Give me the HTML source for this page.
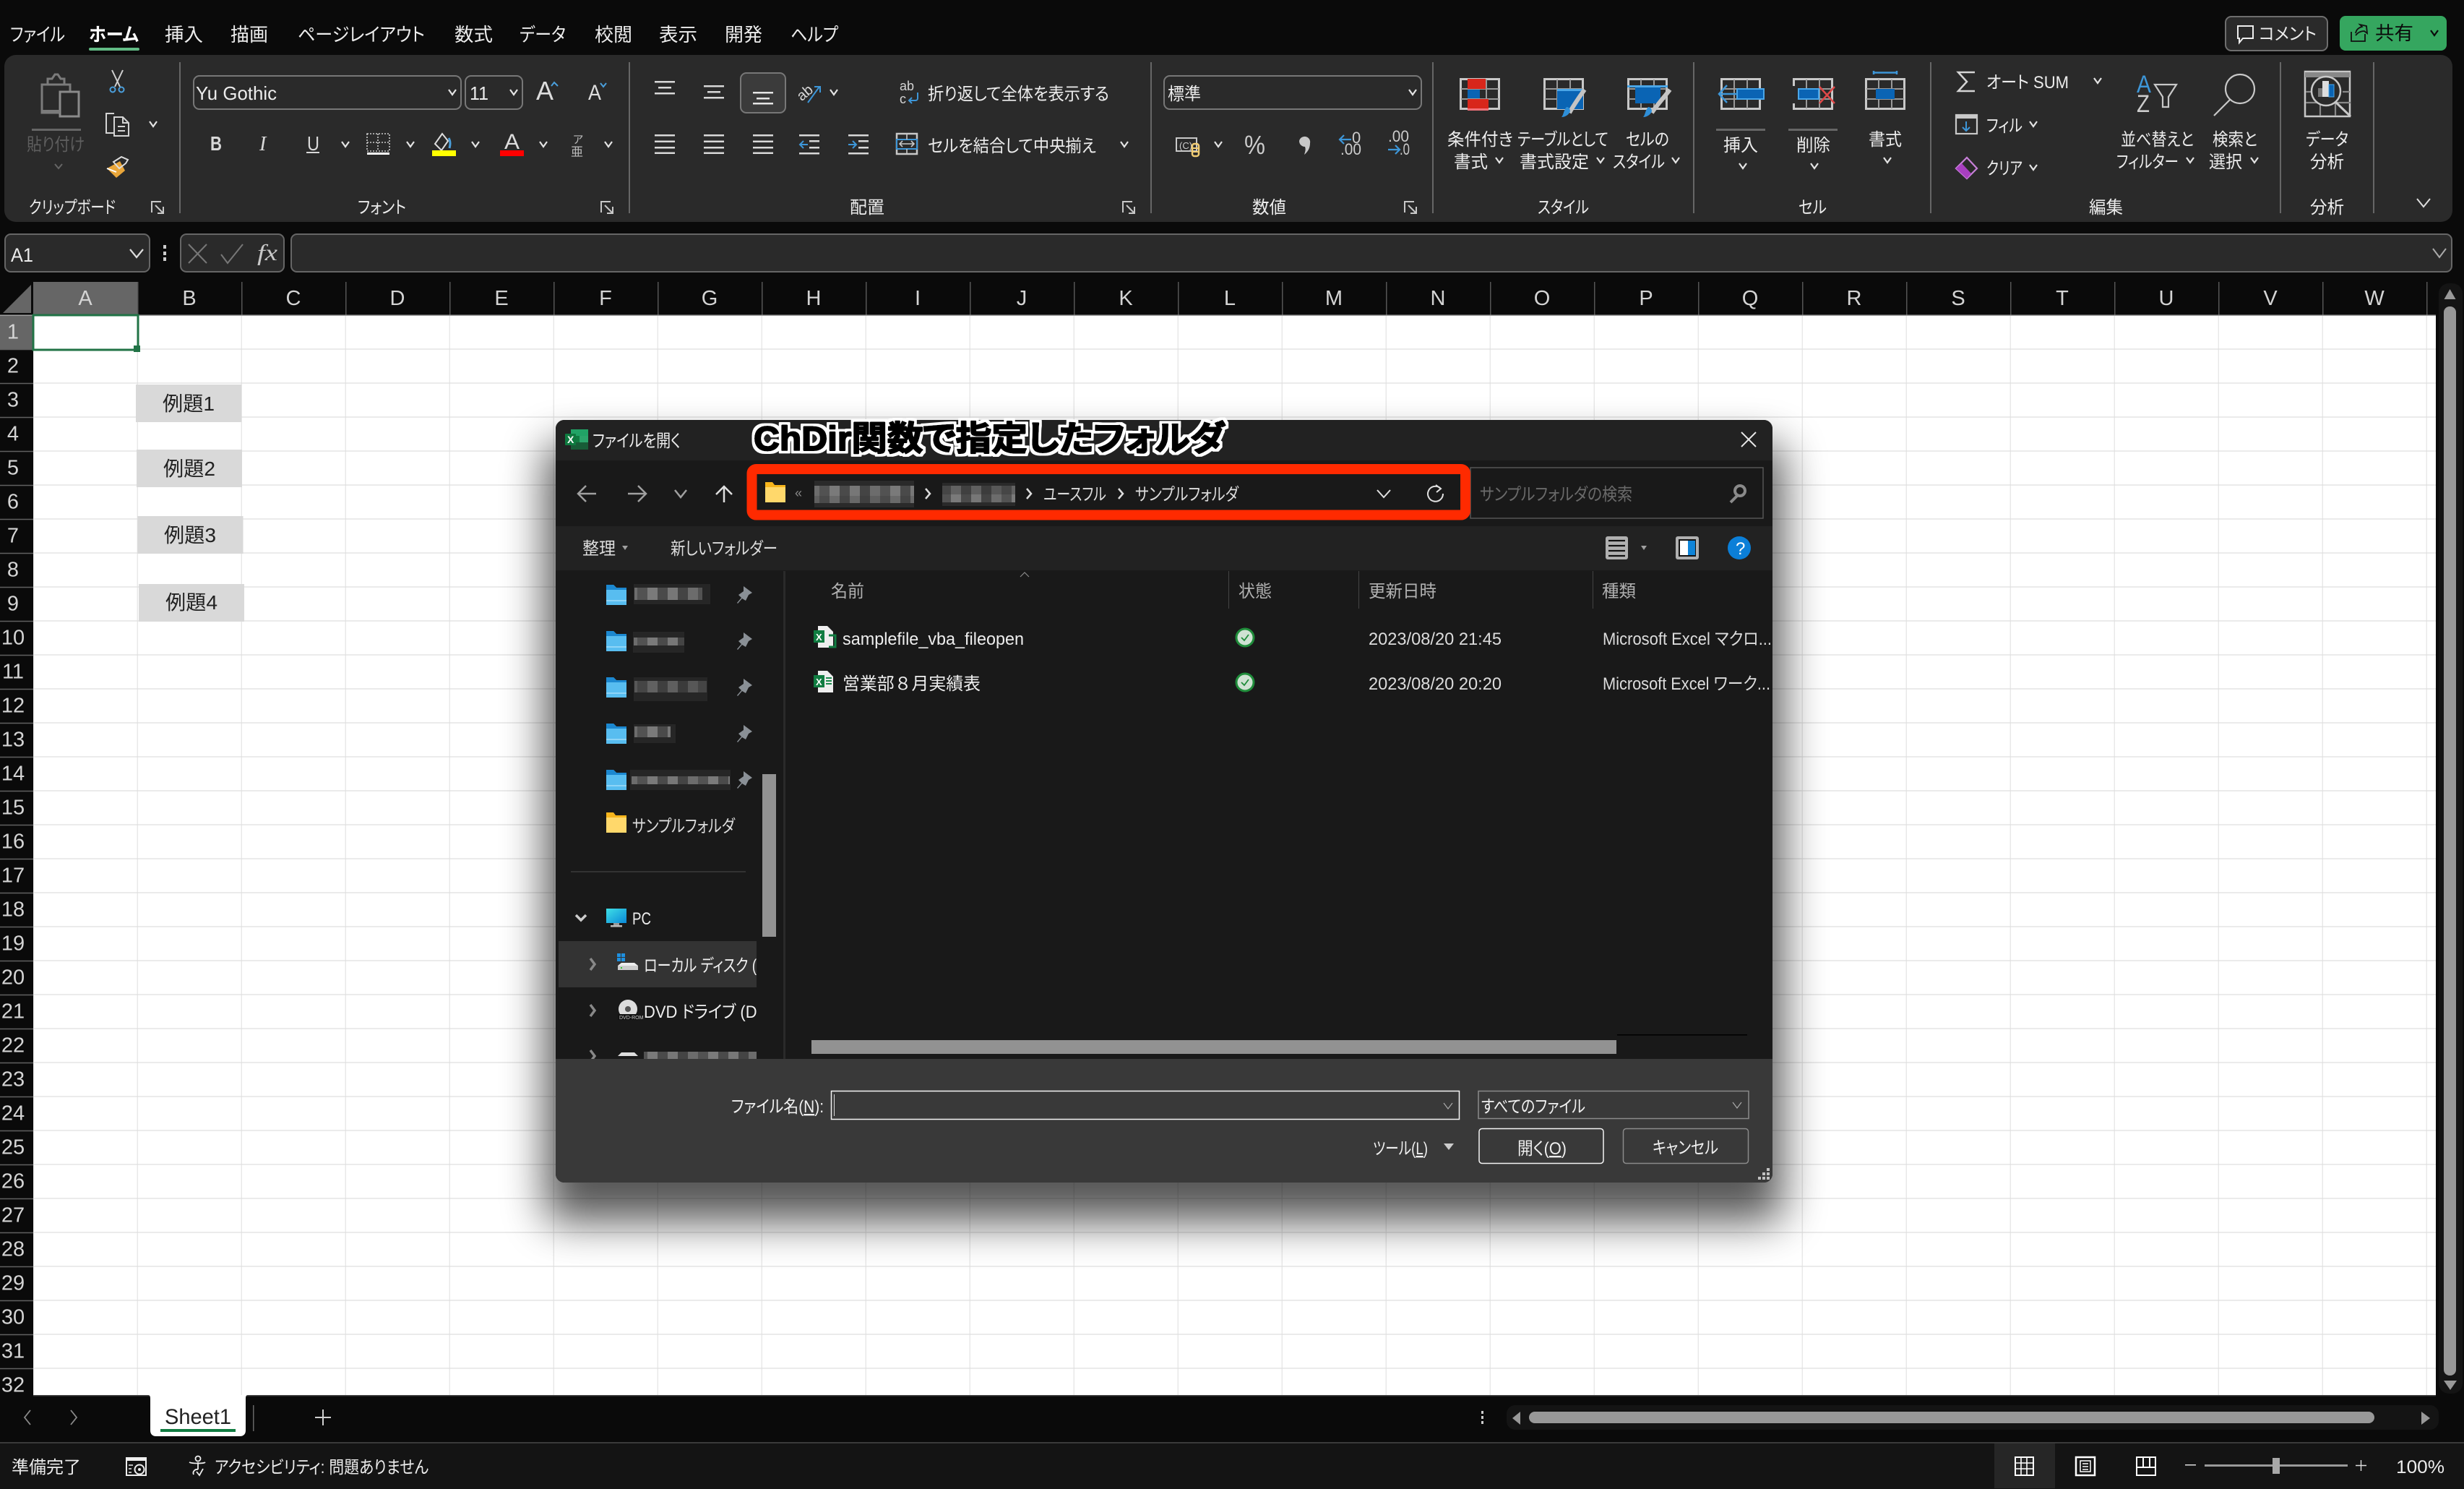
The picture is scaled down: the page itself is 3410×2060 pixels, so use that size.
<!DOCTYPE html>
<html lang="ja"><head><meta charset="utf-8"><title>Excel</title>
<style>
html,body{margin:0;padding:0;background:#0a0a0a}
svg{display:block}
text{font-family:"Liberation Sans","Noto Sans CJK JP",sans-serif;fill:#ececec;font-size:24px;font-feature-settings:"palt";white-space:pre}
.tab text{font-size:26px}
.col text{font-size:29px;text-anchor:middle;fill:#d4d4d4}
.row text{font-size:29px;text-anchor:middle;fill:#d4d4d4}
.d text{fill:#dcdcdc}
</style></head><body>
<svg xmlns="http://www.w3.org/2000/svg" width="3410" height="2060" viewBox="0 0 3410 2060">
<defs>
<pattern id="g" x="46.7" y="436.6" width="144" height="47" patternUnits="userSpaceOnUse"><rect width="144" height="47" fill="#fff"/><rect x="143" width="1.5" height="47" fill="#dedede"/><rect y="45.8" width="144" height="1.5" fill="#dedede"/></pattern>
<pattern id="m" x="0" y="0" width="84" height="14" patternUnits="userSpaceOnUse"><rect width="84" height="14" fill="#5d5d5d"/><rect width="14" height="14" fill="#777"/><rect x="14" width="14" height="14" fill="#444"/><rect x="28" width="14" height="14" fill="#6c6c6c"/><rect x="42" width="14" height="14" fill="#525252"/><rect x="56" width="14" height="14" fill="#7a7a7a"/><rect x="70" width="14" height="14" fill="#4a4a4a"/></pattern>
<path id="c" d="M-5-4L0 3 5-4" fill="none" stroke="#e4e4e4" stroke-width="2.2"/>
<path id="la" d="M0 15V0h13M5 5l10 10M16 7v9H8" fill="none" stroke="#c8c8c8" stroke-width="2"/>
<g id="grid" fill="none" stroke="#c8c8c8"><rect x="1.5" y="1.5" width="53" height="41" stroke-width="3"/><path d="M19 2v40M37 2v40M2 15h52M2 29h52" stroke-width="2" stroke="#999"/></g>
<g id="pin"><path d="M9 0l12 9-5 3-4 8-5-3-6 7-1-1 6-7-4-4 7-5z" fill="#8a9096"/></g>
<g id="fold"><path d="M0 3a2 2 0 0 1 2-2h8l4 4h14v24H0z" fill="#58bdf0"/><path d="M0 1h10l4 4H28v3H0z" fill="#1c88d0"/><rect y="22" width="28" height="2" fill="#8ed4f7"/></g>
<g id="yfold"><path d="M0 2h10l4 4h14v22H0z" fill="#ffd86b"/><path d="M0 0h10l3 4H28v3H0z" fill="#f7b51c"/></g>
<g id="lines4" fill="#d8d8d8"><rect y="0" width="28" height="2.5"/><rect y="8.5" width="28" height="2.5"/><rect y="17" width="28" height="2.5"/><rect y="24.5" width="28" height="2.5"/></g>
<g id="ok"><circle r="12" fill="#cfe2d3" stroke="#1f8c3a" stroke-width="3"/><path d="M-5 0l4 4 6-8" fill="none" stroke="#1f8c3a" stroke-width="1.8"/></g>
<filter id="o" x="-3%" y="-30%" width="106%" height="160%"><feMorphology in="SourceAlpha" operator="dilate" radius="3.5" result="w0"/><feFlood flood-color="#fff"/><feComposite in2="w0" operator="in" result="w"/><feMerge><feMergeNode in="w"/><feMergeNode in="SourceGraphic"/></feMerge></filter>
<filter id="sh" x="-15%" y="-25%" width="130%" height="150%"><feGaussianBlur stdDeviation="30"/></filter>
<clipPath id="dlg"><rect x="769" y="581" width="1684" height="1055" rx="12"/></clipPath>
<clipPath id="nav"><rect x="770" y="790" width="277" height="675"/></clipPath>
<linearGradient id="pc" x1="0" y1="0" x2="1" y2="1"><stop offset="0" stop-color="#3fe0e6"/><stop offset="1" stop-color="#0a88d8"/></linearGradient>
</defs>

<rect width="3410" height="2060" fill="#0a0a0a"/>

<!-- menu tabs -->
<g class="tab">
<text x="14" y="57" textLength="76" lengthAdjust="spacingAndGlyphs">ファイル</text>
<text x="123" y="57" textLength="69" lengthAdjust="spacingAndGlyphs" font-weight="700" style="fill:#fff">ホーム</text>
<text x="228" y="57" textLength="53" lengthAdjust="spacingAndGlyphs">挿入</text>
<text x="319" y="57" textLength="52" lengthAdjust="spacingAndGlyphs">描画</text>
<text x="412" y="57" textLength="176" lengthAdjust="spacingAndGlyphs">ページレイアウト</text>
<text x="629" y="57" textLength="53" lengthAdjust="spacingAndGlyphs">数式</text>
<text x="719" y="57" textLength="64" lengthAdjust="spacingAndGlyphs">データ</text>
<text x="823" y="57" textLength="52" lengthAdjust="spacingAndGlyphs">校閲</text>
<text x="912" y="57" textLength="53" lengthAdjust="spacingAndGlyphs">表示</text>
<text x="1003" y="57" textLength="52" lengthAdjust="spacingAndGlyphs">開発</text>
<text x="1094" y="57" textLength="66" lengthAdjust="spacingAndGlyphs">ヘルプ</text>
</g>
<rect x="123" y="66" width="70" height="4" rx="2" fill="#62bb85"/>

<!-- comment / share -->
<rect x="3080" y="23" width="141" height="47" rx="8" fill="#2a2a2a" stroke="#6e6e6e" stroke-width="2"/>
<path d="M3097 36h21v17h-14l-5 6v-6h-2z" fill="none" stroke="#eee" stroke-width="2"/>
<text x="3126" y="55" textLength="80" lengthAdjust="spacingAndGlyphs">コメント</text>
<rect x="3238" y="22" width="148" height="48" rx="8" fill="#35a65f"/>
<path d="M3254 44v13h19v-10M3260 46c1-6 5-8 9-9l-3-3 9 2 1 10-4-3c-5 0-9 2-12 6" fill="none" stroke="#111" stroke-width="1.8"/>
<text x="3287" y="55" textLength="53" lengthAdjust="spacingAndGlyphs" style="fill:#0a0a0a;font-size:26px">共有</text>
<path d="M3364 42l5 7 5-7" fill="none" stroke="#0a0a0a" stroke-width="2.2"/>

<!-- ribbon -->
<rect x="6" y="76" width="3388" height="231" rx="16" fill="#2a2a2a"/>
<g fill="#666"><rect x="248" y="86" width="2" height="209"/><rect x="870" y="86" width="2" height="209"/><rect x="1592" y="86" width="2" height="209"/><rect x="1982" y="86" width="2" height="209"/><rect x="2343" y="86" width="2" height="209"/><rect x="2671" y="86" width="2" height="209"/><rect x="3155" y="86" width="2" height="209"/><rect x="3284" y="86" width="2" height="209"/></g>

<!-- clipboard -->
<g fill="none" stroke="#7b7b7b" stroke-width="3"><path d="M65 117H58V156H83"/><path d="M88 117H97V127"/><path d="M66 117v-8h6l4-6h4l4 6h5v8z"/><rect x="83" y="127" width="26" height="34" stroke="#8b8b8b"/></g>
<rect x="58" y="152" width="25" height="5" fill="#7b7b7b"/>
<rect x="44" y="178" width="68" height="3" fill="#666"/>
<text x="37" y="208" textLength="80" lengthAdjust="spacingAndGlyphs" style="fill:#5e5e5e">貼り付け</text>
<path d="M76 227l5 6 5-6" fill="none" stroke="#666" stroke-width="2"/>
<g fill="none"><path d="M155 97l11 23M170 97l-11 23" stroke="#d0d0d0" stroke-width="2"/><circle cx="156" cy="124" r="3.5" stroke="#4a9fdc" stroke-width="2"/><circle cx="168" cy="124" r="3.5" stroke="#4a9fdc" stroke-width="2"/>
<path d="M158 184h-11v-27h11M158 162h12l8 8v18h-20z M170 162v8h8M163 175h10M163 181h10" stroke="#d4d4d4" stroke-width="2"/></g>
<use href="#c" x="212" y="172"/>
<path d="M148 233l18-10 7 13-12 10z" fill="#e9a63a"/>
<path d="M157 224l11-7 9 4-3 5-9 7z" fill="none" stroke="#ddd" stroke-width="2"/>
<path d="M148 233l13 5" stroke="#fff" stroke-width="2"/>
<text x="40" y="295" textLength="120" lengthAdjust="spacingAndGlyphs">クリップボード</text>
<use href="#la" x="210" y="279"/>

<!-- font -->
<rect x="268" y="105" width="370" height="46" rx="8" fill="#2a2a2a" stroke="#777" stroke-width="2"/>
<text x="271" y="138" textLength="112" lengthAdjust="spacingAndGlyphs" style="font-size:26px">Yu Gothic</text>
<use href="#c" x="626" y="128"/>
<rect x="644" y="105" width="79" height="46" rx="8" fill="#2a2a2a" stroke="#777" stroke-width="2"/>
<text x="650" y="138" textLength="26" lengthAdjust="spacingAndGlyphs" style="font-size:26px">11</text>
<use href="#c" x="711" y="128"/>
<text x="742" y="138" style="font-size:36px;fill:#ddd" textLength="24" lengthAdjust="spacingAndGlyphs">A</text>
<path d="M763 119l4-5 5 5" fill="none" stroke="#4a9fdc" stroke-width="2"/>
<text x="814" y="138" style="font-size:30px;fill:#ddd" textLength="18" lengthAdjust="spacingAndGlyphs">A</text>
<path d="M831 115l4 5 4-5" fill="none" stroke="#4a9fdc" stroke-width="2"/>
<text x="291" y="208" style="font-size:28px;font-weight:700;fill:#d8d8d8" textLength="16" lengthAdjust="spacingAndGlyphs">B</text>
<text x="359" y="208" style="font-size:28px;font-family:'Liberation Serif',serif;font-style:italic;fill:#d8d8d8">I</text>
<text x="425" y="208" style="font-size:28px;fill:#d8d8d8" textLength="17" lengthAdjust="spacingAndGlyphs">U</text>
<rect x="424" y="210" width="18" height="2" fill="#d8d8d8"/>
<use href="#c" x="478" y="200"/>
<path d="M508 185h31v24h-31zM523 185v24M508 197h31" fill="none" stroke="#ccc" stroke-width="1.6" stroke-dasharray="2 2"/>
<rect x="508" y="211" width="31" height="3" fill="#fff"/>
<use href="#c" x="568" y="200"/>
<path d="M612 185l-10 14 9 9 9-13z" fill="none" stroke="#ddd" stroke-width="2"/><path d="M621 191c3 5 2 10 1 14" stroke="#4a9fdc" stroke-width="3" fill="none"/>
<rect x="598" y="208" width="33" height="8" fill="#ff0"/>
<use href="#c" x="658" y="200"/>
<text x="698" y="206" style="font-size:30px;fill:#ddd" textLength="21" lengthAdjust="spacingAndGlyphs">A</text>
<rect x="692" y="208" width="33" height="8" fill="#f00"/>
<use href="#c" x="752" y="200"/>
<text x="793" y="198" style="font-size:15px;fill:#bbb">ア</text><text x="790" y="216" style="font-size:17px;fill:#bbb">亜</text>
<use href="#c" x="842" y="200"/>
<text x="495" y="295" textLength="67" lengthAdjust="spacingAndGlyphs">フォント</text>
<use href="#la" x="832" y="279"/>

<!-- alignment -->
<g fill="#d8d8d8"><rect x="906" y="112" width="28" height="2.5"/><rect x="911" y="120" width="18" height="2.5"/><rect x="906" y="128" width="28" height="2.5"/>
<rect x="974" y="118" width="28" height="2.5"/><rect x="979" y="126" width="18" height="2.5"/><rect x="974" y="134" width="28" height="2.5"/></g>
<rect x="1025" y="101" width="62" height="55" rx="8" fill="#3b3b3b" stroke="#777" stroke-width="2"/>
<g fill="#e4e4e4"><rect x="1042" y="127" width="28" height="2.5"/><rect x="1047" y="135" width="18" height="2.5"/><rect x="1042" y="142" width="28" height="2.5"/></g>
<text x="1102" y="136" style="font-size:20px;fill:#d8d8d8" transform="rotate(-40 1112 128)">ab</text>
<path d="M1118 142l16-22m-7 0h8v8" fill="none" stroke="#3d96d8" stroke-width="2"/>
<use href="#c" x="1154" y="128"/>
<text x="1245" y="125" style="font-size:18px;fill:#d4d4d4">ab</text><text x="1245" y="143" style="font-size:18px;fill:#d4d4d4">c</text>
<path d="M1270 128v8a3 3 0 0 1-3 3h-9m4-4l-4 4 4 4" fill="none" stroke="#3d96d8" stroke-width="2"/>
<text x="1284" y="138" textLength="251" lengthAdjust="spacingAndGlyphs">折り返して全体を表示する</text>
<use href="#lines4" x="906" y="186"/><use href="#lines4" x="974" y="186"/><use href="#lines4" x="1042" y="186"/>
<g fill="#d8d8d8"><rect x="1106" y="186" width="28" height="2.5"/><rect x="1120" y="194" width="14" height="2.5"/><rect x="1120" y="203" width="14" height="2.5"/><rect x="1106" y="211" width="28" height="2.5"/>
<rect x="1174" y="186" width="28" height="2.5"/><rect x="1188" y="194" width="14" height="2.5"/><rect x="1188" y="203" width="14" height="2.5"/><rect x="1174" y="211" width="28" height="2.5"/></g>
<path d="M1118 200h-11m5-5l-5 5 5 5" fill="none" stroke="#3d96d8" stroke-width="2"/>
<path d="M1174 200h11m-5-5l5 5-5 5" fill="none" stroke="#3d96d8" stroke-width="2"/>
<rect x="1241" y="185" width="28" height="28" fill="none" stroke="#c8c8c8" stroke-width="2.5"/><rect x="1241" y="193" width="28" height="13" fill="#2a2a2a" stroke="#3d96d8" stroke-width="2"/><path d="M1255 185v8M1255 206v8M1245 199h20m-16-4l-4 4 4 4m12-8l4 4-4 4" fill="none" stroke="#c8c8c8" stroke-width="1.6"/>
<text x="1284" y="210" textLength="233" lengthAdjust="spacingAndGlyphs">セルを結合して中央揃え</text>
<use href="#c" x="1556" y="200"/>
<text x="1176" y="295" textLength="48" lengthAdjust="spacingAndGlyphs">配置</text>
<use href="#la" x="1554" y="279"/>

<!-- number -->
<rect x="1611" y="105" width="356" height="46" rx="8" fill="#2a2a2a" stroke="#777" stroke-width="2"/>
<text x="1616" y="138" textLength="46" lengthAdjust="spacingAndGlyphs">標準</text>
<use href="#c" x="1955" y="128"/>
<rect x="1628" y="191" width="28" height="18" fill="none" stroke="#c8c8c8" stroke-width="2"/>
<text x="1632" y="206" style="font-size:13px;fill:#ccc">(C)</text>
<rect x="1650" y="199" width="9" height="17" rx="3" fill="none" stroke="#f2cd74" stroke-width="2.5"/><path d="M1650 205h9M1650 210h9" stroke="#f2cd74" stroke-width="2"/>
<use href="#c" x="1686" y="200"/>
<text x="1722" y="213" textLength="29" lengthAdjust="spacingAndGlyphs" style="font-size:36px;fill:#ccc">%</text>
<path d="M1798 195a7.500 7.500 0 1 1 15 3c0 7-3 12-8 16 2-6 2-8 1-11-4 0-8-3-8-8z" fill="#c8c8c8"/>
<path d="M1870 193h-16m6-6l-6 6 6 6" fill="none" stroke="#3d96d8" stroke-width="2.200"/>
<text x="1871" y="198" style="font-size:22px;fill:#ccc">0</text><text x="1855" y="214" style="font-size:22px;fill:#ccc" textLength="29" lengthAdjust="spacingAndGlyphs">.00</text>
<text x="1921" y="196" style="font-size:22px;fill:#ccc" textLength="29" lengthAdjust="spacingAndGlyphs">.00</text><text x="1937" y="214" style="font-size:22px;fill:#ccc" textLength="14" lengthAdjust="spacingAndGlyphs">.0</text>
<path d="M1921 207h16m-6-6l6 6-6 6" fill="none" stroke="#3d96d8" stroke-width="2.200"/>
<text x="1733" y="295" textLength="47" lengthAdjust="spacingAndGlyphs">数値</text>
<use href="#la" x="1944" y="279"/>

<!-- styles -->
<use href="#grid" x="2020" y="108"/>
<rect x="2031" y="109" width="25" height="14" fill="#d8261b"/><rect x="2031" y="124" width="17" height="12" fill="#0a64b4"/><rect x="2031" y="137" width="29" height="15" fill="#d8261b"/><rect x="2031" y="150" width="29" height="3" fill="#f07078"/>
<use href="#grid" x="2136" y="108"/>
<rect x="2155" y="123" width="36" height="28" fill="#0a64b4"/><rect x="2155" y="123" width="36" height="3" fill="#4aa6e8"/>
<path d="M2193 124c-6 8-16 23-21 32" stroke="#c4c4c4" stroke-width="6" fill="none"/><path d="M2168 148c4 0 5 4 5 6-2 5-7 8-12 8 3-3 3-10 7-14z" fill="#2f8fd8"/>
<use href="#grid" x="2252" y="108"/>
<rect x="2263" y="119" width="35" height="24" fill="#0a64b4"/><rect x="2252" y="118" width="56" height="3" fill="#4aa6e8"/>
<path d="M2311 124c-6 8-20 24-25 32" stroke="#c4c4c4" stroke-width="6" fill="none"/><path d="M2281 148c4 0 5 4 5 6-2 5-7 8-12 8 3-3 3-10 7-14z" fill="#2f8fd8"/>
<text x="2003" y="201" textLength="91" lengthAdjust="spacingAndGlyphs">条件付き</text>
<text x="2012" y="232" textLength="47" lengthAdjust="spacingAndGlyphs">書式</text><use href="#c" x="2075" y="222"/>
<text x="2100" y="201" textLength="126" lengthAdjust="spacingAndGlyphs">テーブルとして</text>
<text x="2103" y="232" textLength="96" lengthAdjust="spacingAndGlyphs">書式設定</text><use href="#c" x="2215" y="222"/>
<text x="2250" y="201" textLength="60" lengthAdjust="spacingAndGlyphs">セルの</text>
<text x="2232" y="232" textLength="72" lengthAdjust="spacingAndGlyphs">スタイル</text><use href="#c" x="2319" y="222"/>
<text x="2128" y="295" textLength="71" lengthAdjust="spacingAndGlyphs">スタイル</text>

<!-- cells -->
<use href="#grid" x="2381" y="108"/>
<rect x="2404" y="123" width="37" height="14" fill="#0a64b4" stroke="#4aa6e8" stroke-width="2"/><path d="M2404 130h-24m10-12l-11 12 11 12" fill="none" stroke="#3d96d8" stroke-width="2.500"/>
<rect x="2375" y="178" width="68" height="3" fill="#666"/>
<text x="2385" y="209" textLength="48" lengthAdjust="spacingAndGlyphs">挿入</text><use href="#c" x="2412" y="230"/>
<use href="#grid" x="2481" y="108"/>
<rect x="2481" y="119" width="12" height="24" fill="#2a2a2a"/>
<rect x="2489" y="123" width="28" height="14" fill="#0a64b4" stroke="#4aa6e8" stroke-width="2"/><path d="M2518 120l21 23M2539 120l-21 23" stroke="#e04848" stroke-width="2.500"/>
<rect x="2475" y="178" width="68" height="3" fill="#666"/>
<text x="2486" y="209" textLength="47" lengthAdjust="spacingAndGlyphs">削除</text><use href="#c" x="2511" y="230"/>
<use href="#grid" x="2581" y="108"/>
<rect x="2596" y="123" width="26" height="14" fill="#0a64b4"/><path d="M2593 98v5M2625 98v5M2593 100.500h32" stroke="#3d96d8" stroke-width="2.500" fill="none"/>
<text x="2586" y="201" textLength="46" lengthAdjust="spacingAndGlyphs">書式</text><use href="#c" x="2612" y="222"/>
<text x="2489" y="295" textLength="39" lengthAdjust="spacingAndGlyphs">セル</text>

<!-- editing -->
<path d="M2733 100h-23l12 13-12 13h23" fill="none" stroke="#d4d4d4" stroke-width="2.500"/>
<text x="2749" y="122" textLength="114" lengthAdjust="spacingAndGlyphs">オート SUM</text><use href="#c" x="2903" y="112"/>
<rect x="2707" y="159" width="29" height="26" fill="none" stroke="#c8c8c8" stroke-width="2.200"/><rect x="2707" y="159" width="29" height="5" fill="#c8c8c8"/><path d="M2721 168v13m-5-5l5 5 5-5" fill="none" stroke="#3d96d8" stroke-width="2"/>
<text x="2749" y="182" textLength="50" lengthAdjust="spacingAndGlyphs">フィル</text><use href="#c" x="2814" y="172"/>
<path d="M2722 218l14 15-14 14-15-14z" fill="none" stroke="#c77fd8" stroke-width="2.200"/><path d="M2707 233l8-7 13 14-6 7z" fill="#a83fc0"/>
<text x="2749" y="241" textLength="50" lengthAdjust="spacingAndGlyphs">クリア</text><use href="#c" x="2814" y="232"/>
<text x="2957" y="128" style="font-size:34px;fill:#3d96d8" textLength="20" lengthAdjust="spacingAndGlyphs">A</text>
<text x="2957" y="155" style="font-size:34px;fill:#ccc" textLength="18" lengthAdjust="spacingAndGlyphs">Z</text>
<path d="M2982 117h30l-11 17v14h-8v-14z" fill="none" stroke="#c8c8c8" stroke-width="2.200"/>
<circle cx="3100" cy="123" r="20" fill="none" stroke="#c8c8c8" stroke-width="2.200"/><path d="M3086 138l-22 22" stroke="#c8c8c8" stroke-width="2.200"/>
<text x="2935" y="201" textLength="101" lengthAdjust="spacingAndGlyphs">並べ替えと</text>
<text x="2929" y="232" textLength="86" lengthAdjust="spacingAndGlyphs">フィルター</text><use href="#c" x="3031" y="222"/>
<text x="3062" y="201" textLength="62" lengthAdjust="spacingAndGlyphs">検索と</text>
<text x="3057" y="232" textLength="46" lengthAdjust="spacingAndGlyphs">選択</text><use href="#c" x="3120" y="222"/>
<text x="2891" y="295" textLength="47" lengthAdjust="spacingAndGlyphs">編集</text>

<!-- analysis -->
<rect x="3190" y="99" width="62" height="62" fill="none" stroke="#c8c8c8" stroke-width="2.500"/><rect x="3190" y="100" width="62" height="7" fill="#888"/>
<path d="M3191 127h10M3242 127h10M3191 142h62M3211 142v18M3232 142v18" stroke="#888" stroke-width="2.200" fill="none"/>
<circle cx="3219" cy="126" r="20" fill="#2a2a2a" stroke="#c8c8c8" stroke-width="2.500"/><path d="M3232 141l21 20" stroke="#c8c8c8" stroke-width="3"/>
<rect x="3208" y="122" width="8" height="12" fill="#777"/><rect x="3214" y="112" width="9" height="22" fill="#ddd"/><rect x="3223" y="117" width="7" height="17" fill="#0a64b4" stroke="#4aa6e8"/>
<text x="3191" y="201" textLength="59" lengthAdjust="spacingAndGlyphs">データ</text>
<text x="3197" y="232" textLength="47" lengthAdjust="spacingAndGlyphs">分析</text>
<text x="3197" y="295" textLength="47" lengthAdjust="spacingAndGlyphs">分析</text>
<path d="M3345 275l9 11 9-11" fill="none" stroke="#ddd" stroke-width="2"/>

<!-- formula bar -->
<rect x="7" y="324" width="200" height="52" rx="8" fill="#2a2a2a" stroke="#666" stroke-width="2"/>
<text x="15" y="362" textLength="31" lengthAdjust="spacingAndGlyphs" style="font-size:27px">A1</text>
<path d="M180 345l9 11 9-11" fill="none" stroke="#ddd" stroke-width="2.200"/>
<g fill="#ccc"><rect x="226" y="339" width="4" height="5"/><rect x="226" y="348" width="4" height="5"/><rect x="226" y="356" width="4" height="5"/></g>
<rect x="250" y="324" width="143" height="52" rx="8" fill="#2a2a2a" stroke="#666" stroke-width="2"/>
<path d="M261 338l25 26M286 338l-25 26" stroke="#777" stroke-width="2"/>
<path d="M306 352l9 12 21-26" fill="none" stroke="#777" stroke-width="2"/>
<text x="356" y="360" style="font-family:'Liberation Serif',serif;font-style:italic;font-size:32px;fill:#c8c8c8" textLength="28" lengthAdjust="spacingAndGlyphs">fx</text>
<rect x="403" y="324" width="2990" height="52" rx="8" fill="#2a2a2a" stroke="#666" stroke-width="2"/>
<path d="M3367 344l9 12 9-12" fill="none" stroke="#aaa" stroke-width="2"/>

<!-- sheet grid -->
<rect x="46" y="436" width="3325" height="1494" fill="url(#g)"/>
<rect x="46" y="390" width="144" height="46" fill="#666"/>
<path d="M4 433L43 394V433Z" fill="#666"/>
<g fill="#555"><rect x="190" y="390" width="1.500" height="46"/><rect x="334" y="390" width="1.500" height="46"/><rect x="478" y="390" width="1.500" height="46"/><rect x="622" y="390" width="1.500" height="46"/><rect x="766" y="390" width="1.500" height="46"/><rect x="910" y="390" width="1.500" height="46"/><rect x="1054" y="390" width="1.500" height="46"/><rect x="1198" y="390" width="1.500" height="46"/><rect x="1342" y="390" width="1.500" height="46"/><rect x="1486" y="390" width="1.500" height="46"/><rect x="1630" y="390" width="1.500" height="46"/><rect x="1774" y="390" width="1.500" height="46"/><rect x="1918" y="390" width="1.500" height="46"/><rect x="2062" y="390" width="1.500" height="46"/><rect x="2206" y="390" width="1.500" height="46"/><rect x="2350" y="390" width="1.500" height="46"/><rect x="2494" y="390" width="1.500" height="46"/><rect x="2638" y="390" width="1.500" height="46"/><rect x="2782" y="390" width="1.500" height="46"/><rect x="2926" y="390" width="1.500" height="46"/><rect x="3070" y="390" width="1.500" height="46"/><rect x="3214" y="390" width="1.500" height="46"/><rect x="3358" y="390" width="1.500" height="46"/></g>
<rect x="0" y="435.500" width="3371" height="1.500" fill="#a0a0a0"/>
<g class="col">
<text x="118" y="422">A</text><text x="262" y="422">B</text><text x="406" y="422">C</text><text x="550" y="422">D</text><text x="694" y="422">E</text><text x="838" y="422">F</text><text x="982" y="422">G</text><text x="1126" y="422">H</text><text x="1270" y="422">I</text><text x="1414" y="422">J</text><text x="1558" y="422">K</text><text x="1702" y="422">L</text><text x="1846" y="422">M</text><text x="1990" y="422">N</text><text x="2134" y="422">O</text><text x="2278" y="422">P</text><text x="2422" y="422">Q</text><text x="2566" y="422">R</text><text x="2710" y="422">S</text><text x="2854" y="422">T</text><text x="2998" y="422">U</text><text x="3142" y="422">V</text><text x="3286" y="422">W</text>
</g>
<rect x="0" y="437" width="46" height="46" fill="#666"/>
<path d="M0 483.500h46M0 530.500h46M0 577.500h46M0 624.500h46M0 671.500h46M0 718.500h46M0 765.500h46M0 812.500h46M0 859.500h46M0 906.500h46M0 953.500h46M0 1000.500h46M0 1047.500h46M0 1094.500h46M0 1141.500h46M0 1188.500h46M0 1235.500h46M0 1282.500h46M0 1329.500h46M0 1376.500h46M0 1423.500h46M0 1470.500h46M0 1517.500h46M0 1564.500h46M0 1611.500h46M0 1658.500h46M0 1705.500h46M0 1752.500h46M0 1799.500h46M0 1846.500h46M0 1893.500h46" stroke="#606060" stroke-width="1.400" fill="none"/>
<g class="row">
<text x="18" y="468.500">1</text><text x="18" y="515.500">2</text><text x="18" y="562.500">3</text><text x="18" y="609.500">4</text><text x="18" y="656.500">5</text><text x="18" y="703.500">6</text><text x="18" y="750.500">7</text><text x="18" y="797.500">8</text><text x="18" y="844.500">9</text><text x="18" y="891.500">10</text><text x="18" y="938.500">11</text><text x="18" y="985.500">12</text><text x="18" y="1032.500">13</text><text x="18" y="1079.500">14</text><text x="18" y="1126.500">15</text><text x="18" y="1173.500">16</text><text x="18" y="1220.500">17</text><text x="18" y="1267.500">18</text><text x="18" y="1314.500">19</text><text x="18" y="1361.500">20</text><text x="18" y="1408.500">21</text><text x="18" y="1455.500">22</text><text x="18" y="1502.500">23</text><text x="18" y="1549.500">24</text><text x="18" y="1596.500">25</text><text x="18" y="1643.500">26</text><text x="18" y="1690.500">27</text><text x="18" y="1737.500">28</text><text x="18" y="1784.500">29</text><text x="18" y="1831.500">30</text><text x="18" y="1878.500">31</text><text x="18" y="1925.500">32</text>
</g>
<rect x="46" y="436" width="145" height="48" fill="none" stroke="#217346" stroke-width="3"/>
<rect x="185" y="478" width="9" height="9" fill="#217346"/>

<!-- gray cells -->
<rect x="188" y="532" width="146.500" height="52" fill="#d9d9d9"/>
<rect x="189" y="622" width="146" height="52" fill="#d9d9d9"/>
<rect x="190.500" y="714" width="146" height="52" fill="#d9d9d9"/>
<rect x="192" y="808" width="146" height="52" fill="#d9d9d9"/>
<text x="225" y="568" textLength="72" lengthAdjust="spacingAndGlyphs" style="font-size:28px;fill:#222;font-feature-settings:normal">例題1</text>
<text x="226" y="658" textLength="72" lengthAdjust="spacingAndGlyphs" style="font-size:28px;fill:#222;font-feature-settings:normal">例題2</text>
<text x="227" y="750" textLength="72" lengthAdjust="spacingAndGlyphs" style="font-size:28px;fill:#222;font-feature-settings:normal">例題3</text>
<text x="229" y="843" textLength="72" lengthAdjust="spacingAndGlyphs" style="font-size:28px;fill:#222;font-feature-settings:normal">例題4</text>

<!-- dialog shadow -->
<rect x="755" y="615" width="1712" height="1075" rx="16" fill="#000" opacity=".66" filter="url(#sh)"/>

<!-- dialog -->
<g class="d" clip-path="url(#dlg)">
<rect x="769" y="581" width="1684" height="1055" fill="#191919"/>
<rect x="769" y="581" width="1684" height="56" fill="#222"/>
<!-- excel logo -->
<rect x="790" y="594" width="24" height="28" fill="#185c37"/><rect x="790" y="594" width="24" height="9" fill="#21a366"/><rect x="802" y="603" width="12" height="9" fill="#33c481" opacity=".7"/><rect x="790" y="603" width="12" height="9" fill="#107c41"/>
<rect x="782" y="600" width="15" height="16" rx="1" fill="#0e7a3f"/><text x="785" y="613" style="font-size:14px;font-weight:700;fill:#fff">X</text>
<text x="820" y="618" textLength="122" lengthAdjust="spacingAndGlyphs" style="fill:#eee">ファイルを開く</text>
<path d="M2410 598l20 20M2430 598l-20 20" stroke="#e8e8e8" stroke-width="2"/>

<!-- nav bar -->
<rect x="769" y="637" width="1684" height="91" fill="#191919"/>
<path d="M825 683h-24m10-11l-11 11 11 11" fill="none" stroke="#a0a0a0" stroke-width="2.500"/>
<path d="M869 683h24m-10-11l11 11-11 11" fill="none" stroke="#a0a0a0" stroke-width="2.500"/>
<path d="M934 678l8 10 8-10" fill="none" stroke="#a0a0a0" stroke-width="2.500"/>
<path d="M1002 695v-21m-11 10l11-11 11 11" fill="none" stroke="#e0e0e0" stroke-width="2.500"/>
<rect x="2035" y="647" width="405" height="70" fill="none" stroke="#555" stroke-width="1.500"/>
<text x="2048" y="692" textLength="211" lengthAdjust="spacingAndGlyphs" style="fill:#6a6a6a">サンプルフォルダの検索</text>
<circle cx="2408" cy="679" r="7" fill="none" stroke="#8a8a8a" stroke-width="4"/><path d="M2404 686l-9 9" stroke="#8a8a8a" stroke-width="4"/>
<rect x="1040.500" y="649" width="987.500" height="63.500" rx="6" fill="#191919" stroke="#ff2a00" stroke-width="14"/>
<use href="#yfold" x="1059" y="667"/>
<text x="1100" y="688" style="font-size:18px;fill:#888">«</text>
<rect x="1127" y="665" width="138" height="37" fill="#2a2a2a"/><rect x="1127" y="672" width="138" height="14" fill="url(#m)"/><rect x="1127" y="686" width="138" height="10" fill="url(#m)" opacity=".8"/>
<path d="M1281 676l6 7-6 7" fill="none" stroke="#ddd" stroke-width="2.500"/>
<rect x="1304" y="668" width="101" height="32" fill="#2a2a2a"/><rect x="1304" y="672" width="101" height="12" fill="url(#m)" opacity=".7"/><rect x="1304" y="684" width="101" height="11" fill="url(#m)"/>
<path d="M1421 676l6 7-6 7" fill="none" stroke="#ddd" stroke-width="2.500"/>
<text x="1444" y="692" textLength="87" lengthAdjust="spacingAndGlyphs">ユースフル</text>
<path d="M1548 676l6 7-6 7" fill="none" stroke="#ddd" stroke-width="2.500"/>
<text x="1571" y="692" textLength="143" lengthAdjust="spacingAndGlyphs">サンプルフォルダ</text>
<path d="M1906 678l9 10 9-10" fill="none" stroke="#e0e0e0" stroke-width="2"/>
<path d="M1993 675a10.500 10.500 0 1 0 4 8M1987 671l7 5-6 5" fill="none" stroke="#e0e0e0" stroke-width="2"/>

<!-- toolbar -->
<rect x="769" y="728" width="1684" height="61" fill="#222"/>
<text x="806" y="767" textLength="46" lengthAdjust="spacingAndGlyphs">整理</text>
<path d="M861 755h8l-4 6z" fill="#a0a0a0"/>
<text x="928" y="767" textLength="148" lengthAdjust="spacingAndGlyphs">新しいフォルダー</text>
<rect x="2222" y="742" width="31" height="32" rx="3" fill="#b0b0b0"/><path d="M2226 748h23M2226 755h23M2226 762h23M2226 769h23" stroke="#111" stroke-width="2.200"/>
<path d="M2271 755h8l-4 6z" fill="#a0a0a0"/>
<rect x="2319" y="742" width="32" height="32" rx="3" fill="#b0b0b0"/><rect x="2323" y="746" width="24" height="24" fill="#111"/><rect x="2325" y="748" width="11" height="20" fill="#fff"/><rect x="2336" y="748" width="10" height="20" fill="#0f84d8"/>
<circle cx="2407" cy="758" r="16" fill="#0b7fd8"/><text x="2402" y="767" style="font-size:24px;fill:#fff">?</text>

<!-- nav pane -->
<rect x="1084" y="790" width="3" height="675" fill="#2a2a2a"/>
<rect x="1055" y="1071" width="19" height="225" fill="#929292"/>
<use href="#fold" x="839" y="808"/><use href="#fold" x="839" y="872"/><use href="#fold" x="839" y="936"/><use href="#fold" x="839" y="1000"/><use href="#fold" x="839" y="1064"/>
<rect x="877" y="808" width="106" height="28" fill="#262626"/><rect x="878" y="813" width="94" height="17" fill="url(#m)"/>
<rect x="876" y="874" width="71" height="29" fill="#262626"/><rect x="877" y="882" width="70" height="11" fill="url(#m)"/>
<rect x="877" y="937" width="102" height="33" fill="#262626"/><rect x="878" y="942" width="100" height="16" fill="url(#m)" opacity=".7"/>
<rect x="877" y="1002" width="58" height="26" fill="#262626"/><rect x="878" y="1005" width="50" height="15" fill="url(#m)"/>
<rect x="872" y="1065" width="139" height="28" fill="#262626"/><rect x="874" y="1074" width="136" height="11" fill="url(#m)"/>
<use href="#pin" x="1020" y="811"/><use href="#pin" x="1020" y="875"/><use href="#pin" x="1020" y="939"/><use href="#pin" x="1020" y="1003"/><use href="#pin" x="1020" y="1067"/>
<use href="#yfold" x="839" y="1124"/>
<text x="875" y="1151" textLength="142" lengthAdjust="spacingAndGlyphs">サンプルフォルダ</text>
<rect x="790" y="1205" width="242" height="2" fill="#333"/>
<path d="M797 1266l7 7 7-7" fill="none" stroke="#ccc" stroke-width="3.500"/>
<rect x="839" y="1257" width="28" height="20" fill="url(#pc)"/><rect x="849" y="1277" width="8" height="3" fill="#999"/><rect x="845" y="1280" width="16" height="2.500" fill="#bbb"/>
<text x="875" y="1279" textLength="26" lengthAdjust="spacingAndGlyphs" style="fill:#eee">PC</text>
<g clip-path="url(#nav)">
<rect x="773" y="1302" width="274" height="64" fill="#333"/>
<path d="M817 1326l6 8-6 8" fill="none" stroke="#888" stroke-width="3.500"/>
<rect x="854" y="1319" width="5" height="5" fill="#1e90e0"/><rect x="860" y="1319" width="5" height="5" fill="#1e90e0"/><rect x="854" y="1325" width="5" height="5" fill="#1e90e0"/><rect x="860" y="1325" width="5" height="5" fill="#1e90e0"/>
<path d="M855 1336l5-4h18l5 4z" fill="#eee"/><rect x="855" y="1336" width="28" height="6" fill="#ccc"/><rect x="859" y="1338" width="2" height="2" fill="#3c3"/>
<text x="891" y="1344" textLength="170" lengthAdjust="spacingAndGlyphs" style="fill:#f0f0f0">ローカル ディスク (C</text>
<path d="M817 1390l6 8-6 8" fill="none" stroke="#888" stroke-width="3.500"/>
<circle cx="869" cy="1396" r="13" fill="#ddd"/><circle cx="869" cy="1396" r="4" fill="#555"/><rect x="855" y="1403" width="28" height="8" fill="#111"/><text x="857" y="1410" style="font-size:7px;fill:#ccc">DVD-ROM</text>
<text x="891" y="1408" textLength="170" lengthAdjust="spacingAndGlyphs" style="fill:#f0f0f0">DVD ドライブ (D:)</text>
<path d="M817 1453l6 8-6 8" fill="none" stroke="#888" stroke-width="3.500"/>
<path d="M855 1461l5-5h18l5 5z" fill="#ddd"/>
<rect x="891" y="1455" width="156" height="10" fill="url(#m)"/>
</g>

<!-- file list -->
<text x="1150" y="826" textLength="46" lengthAdjust="spacingAndGlyphs" style="fill:#b0b0b0">名前</text>
<path d="M1412 798l6-6 6 6" fill="none" stroke="#8a8a8a" stroke-width="1.200"/>
<g fill="#444"><rect x="1700" y="790" width="1" height="52"/><rect x="1880" y="790" width="1" height="52"/><rect x="2204" y="790" width="1" height="52"/></g>
<text x="1714" y="826" textLength="46" lengthAdjust="spacingAndGlyphs" style="fill:#b0b0b0">状態</text>
<text x="1894" y="826" textLength="94" lengthAdjust="spacingAndGlyphs" style="fill:#b0b0b0">更新日時</text>
<text x="2217" y="826" textLength="47" lengthAdjust="spacingAndGlyphs" style="fill:#b0b0b0">種類</text>
<path d="M1132 866h13l8 8v22h-21z" fill="#eee"/><rect x="1126" y="872" width="15" height="17" fill="#107c41"/><text x="1129" y="886" style="font-size:13px;font-weight:700;fill:#fff">X</text><path d="M1147 879h9v16h-9" fill="none" stroke="#107c41" stroke-width="3"/>
<path d="M1132 928h13l8 8v22h-21z" fill="#eee"/><rect x="1126" y="934" width="15" height="17" fill="#107c41"/><text x="1129" y="948" style="font-size:13px;font-weight:700;fill:#fff">X</text><path d="M1143 938h8M1143 942h8M1143 946h8" stroke="#1a8a4c" stroke-width="2"/>
<text x="1166" y="892" textLength="251" lengthAdjust="spacingAndGlyphs" style="fill:#eee">samplefile_vba_fileopen</text>
<text x="1166" y="954" textLength="191" lengthAdjust="spacingAndGlyphs" style="fill:#eee;font-feature-settings:normal">営業部８月実績表</text>
<use href="#ok" x="1723" y="882"/><use href="#ok" x="1723" y="944"/>
<text x="1894" y="892" textLength="184" lengthAdjust="spacingAndGlyphs">2023/08/20 21:45</text>
<text x="1894" y="954" textLength="184" lengthAdjust="spacingAndGlyphs">2023/08/20 20:20</text>
<text x="2218" y="892" textLength="234" lengthAdjust="spacingAndGlyphs">Microsoft Excel マクロ...</text>
<text x="2218" y="954" textLength="232" lengthAdjust="spacingAndGlyphs">Microsoft Excel ワーク...</text>
<rect x="1123" y="1439" width="1114" height="19" fill="#929292"/>
<rect x="2238" y="1431" width="180" height="1.500" fill="#000"/>

<!-- bottom panel -->
<rect x="769" y="1465" width="1684" height="171" fill="#393939"/>
<text x="1012" y="1539" textLength="128" lengthAdjust="spacingAndGlyphs" style="fill:#f0f0f0">ファイル名(<tspan text-decoration="underline">N</tspan>):</text>
<rect x="1150.500" y="1509.500" width="869" height="39" fill="#393939" stroke="#f4f4f4" stroke-width="1.500"/>
<rect x="1154" y="1514" width="1" height="30" fill="#ddd"/>
<path d="M1998 1526l6 8 6-8" fill="none" stroke="#aaa" stroke-width="1.200"/>
<rect x="2046" y="1509.500" width="374" height="38" fill="#393939" stroke="#8a8a8a" stroke-width="1.500"/>
<text x="2050" y="1539" textLength="144" lengthAdjust="spacingAndGlyphs" style="fill:#f0f0f0">すべてのファイル</text>
<path d="M2398 1525l6 8 6-8" fill="none" stroke="#aaa" stroke-width="1.200"/>
<text x="1900" y="1597" textLength="76" lengthAdjust="spacingAndGlyphs" style="fill:#f0f0f0">ツール(<tspan text-decoration="underline">L</tspan>)</text>
<path d="M1998 1582h14l-7 9z" fill="#ccc"/>
<rect x="2047" y="1561.500" width="172" height="48" rx="4" fill="#393939" stroke="#f4f4f4" stroke-width="1.500"/>
<text x="2100" y="1597" textLength="68" lengthAdjust="spacingAndGlyphs" style="fill:#f0f0f0">開く(<tspan text-decoration="underline">O</tspan>)</text>
<rect x="2246.500" y="1561.500" width="173" height="48" rx="4" fill="#393939" stroke="#8a8a8a" stroke-width="1.500"/>
<text x="2287" y="1596" textLength="91" lengthAdjust="spacingAndGlyphs" style="fill:#f0f0f0">キャンセル</text>
<g fill="#c0c0c0"><rect x="2445" y="1616" width="4" height="4"/><rect x="2439" y="1622" width="4" height="4"/><rect x="2445" y="1622" width="4" height="4"/><rect x="2433" y="1628" width="4" height="4"/><rect x="2439" y="1628" width="4" height="4"/><rect x="2445" y="1628" width="4" height="4"/></g>
</g>
<!-- annotation -->
<text x="1043" y="623" textLength="652" lengthAdjust="spacingAndGlyphs" filter="url(#o)" style="font-size:47px;font-weight:700;fill:#000;stroke:#000;stroke-width:2px;stroke-linejoin:round">ChDir関数で指定したフォルダ</text>

<!-- v scrollbar -->
<rect x="3371" y="390" width="39" height="1540" fill="#0a0a0a"/>
<rect x="3375" y="392" width="33" height="1536" rx="14" fill="#141414"/>
<path d="M3390.500 400l8 14h-16z" fill="#999"/>
<rect x="3382" y="424" width="17" height="1479" rx="8" fill="#989898"/>
<path d="M3382 1910h18l-9 13z" fill="#999"/>

<!-- tabs bar -->
<rect x="0" y="1930" width="3410" height="65" fill="#0a0a0a"/>
<rect x="46" y="1930" width="3325" height="1.500" fill="#444"/>
<rect x="0" y="1995" width="3410" height="2" fill="#3a3a3a"/>
<rect x="0" y="1997" width="3410" height="63" fill="#141414"/>
<path d="M42 1951l-8 10 8 10" fill="none" stroke="#8a8a8a" stroke-width="1.800"/>
<path d="M98 1951l8 10-8 10" fill="none" stroke="#8a8a8a" stroke-width="1.800"/>
<path d="M205 1930h138c-3 0-3 3-3 6v43c0 5-3 8-8 8H216c-5 0-8-3-8-8v-43c0-3 0-6-3-6z" fill="#fff"/>
<text x="228" y="1970" textLength="92" lengthAdjust="spacingAndGlyphs" style="font-size:30px;fill:#222">Sheet1</text>
<rect x="222" y="1977" width="104" height="4" fill="#107c41"/>
<rect x="350" y="1944" width="1.500" height="36" fill="#666"/>
<path d="M436 1961h22M447 1950v22" stroke="#cfcfcf" stroke-width="2"/>
<g fill="#ccc"><rect x="2050" y="1952" width="3" height="4"/><rect x="2050" y="1959" width="3" height="4"/><rect x="2050" y="1966" width="3" height="4"/></g>
<rect x="2085" y="1944" width="1290" height="34" rx="12" fill="#141414"/>
<path d="M2104 1953v18l-11-9z" fill="#989898"/>
<rect x="2116" y="1953" width="1170" height="16" rx="8" fill="#989898"/>
<path d="M3351 1953v18l12-9z" fill="#989898"/>

<!-- status bar -->
<text x="16" y="2038" textLength="96" lengthAdjust="spacingAndGlyphs">準備完了</text>
<rect x="175" y="2017" width="27" height="24" fill="none" stroke="#eee" stroke-width="2"/><rect x="175" y="2017" width="27" height="4" fill="#eee"/><circle cx="193" cy="2033" r="6.500" fill="#141414" stroke="#eee" stroke-width="2"/><circle cx="193" cy="2033" r="2" fill="#eee"/><path d="M178 2027h6M178 2032h4M178 2037h4" stroke="#eee" stroke-width="1.500"/>
<circle cx="274" cy="2018" r="3.500" fill="none" stroke="#eee" stroke-width="1.800"/><path d="M262 2023c4 2 20 2 22 0M274 2023v10M268 2040c-2-4 2-8 6-7M281 2032l-5 9-4-5" fill="none" stroke="#eee" stroke-width="1.800"/>
<text x="297" y="2038" textLength="296" lengthAdjust="spacingAndGlyphs">アクセシビリティ: 問題ありません</text>
<rect x="2760" y="1997" width="84" height="62" fill="#262626"/>
<rect x="2789" y="2016" width="25" height="25" fill="none" stroke="#fff" stroke-width="2"/><path d="M2797 2016v25M2805 2016v25M2789 2024h25M2789 2032h25" stroke="#fff" stroke-width="1.600"/>
<rect x="2873" y="2016" width="26" height="25" fill="none" stroke="#fff" stroke-width="2.500"/><rect x="2879" y="2021" width="14" height="15" fill="none" stroke="#fff" stroke-width="1.500"/><path d="M2882 2025h8M2882 2029h8M2882 2033h8" stroke="#fff" stroke-width="1.500"/>
<rect x="2957" y="2016" width="26" height="25" fill="none" stroke="#fff" stroke-width="2"/><path d="M2966 2016v14M2975 2016v14M2957 2030h26" stroke="#fff" stroke-width="2"/>
<rect x="3024" y="2026" width="15" height="1.500" fill="#ddd"/>
<rect x="3051" y="2026" width="198" height="3" fill="#9a9a9a"/>
<rect x="3145" y="2017" width="10" height="22" fill="#a8a8a8"/>
<path d="M3260 2027.500h15M3267.500 2020v15" stroke="#ddd" stroke-width="1.400"/>
<text x="3316" y="2038" textLength="67" lengthAdjust="spacingAndGlyphs" style="font-size:25px">100%</text>
</svg>
</body></html>
